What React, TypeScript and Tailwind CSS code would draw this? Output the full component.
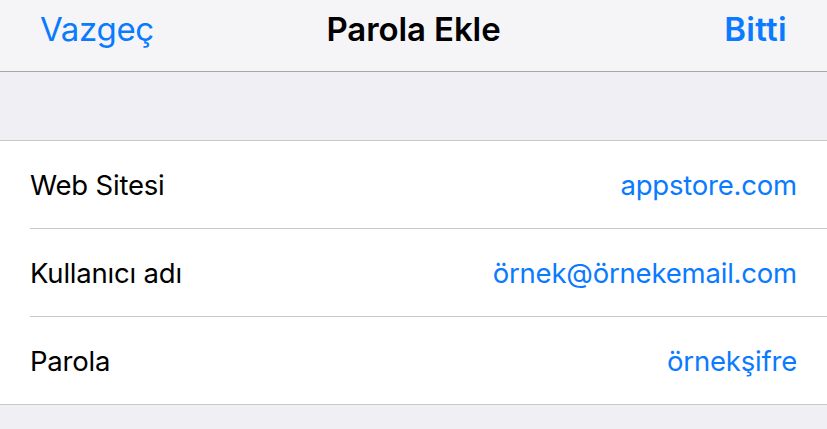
import React from 'react';

const rows = [
  { label: 'Web Sitesi', value: 'appstore.com' },
  { label: 'Kullanıcı adı', value: 'örnek@örnekemail.com' },
  { label: 'Parola', value: 'örnekşifre' },
];

export default function App() {
  return (
    <div className="h-[429px] w-[827px] overflow-hidden bg-[#efeff4] font-['Inter',sans-serif]">
      {/* Navigation bar */}
      <div className="grid h-[72px] grid-cols-[1fr_auto_1fr] items-center border-b border-[#a7a7aa] bg-[#f5f5f7] px-[40px] pb-[12px]">
        <span className="justify-self-start text-[33px] tracking-[-0.3px] text-[#0a7aff]">Vazgeç</span>
        <span className="text-[33px] font-semibold tracking-[-0.1px] text-black">Parola Ekle</span>
        <span className="justify-self-end text-[33px] font-semibold tracking-[0.3px] text-[#0a7aff]">Bitti</span>
      </div>

      <div className="h-[68px]" />

      {/* Form rows */}
      <div className="border-y border-[#c8c7cc] bg-white">
        {rows.map((row, i) => {
          const last = i === rows.length - 1;
          return (
            <div key={row.label} className="pl-[30px]">
              <div
                className={
                  'flex items-center justify-between pr-[30px] pt-[3px] ' +
                  (last ? 'h-[87px]' : 'h-[88px] border-b border-[#c8c7cc]')
                }
              >
                <span className="text-[27.5px] tracking-[-0.2px] text-black">{row.label}</span>
                <span className="text-[27.5px] tracking-[-0.2px] text-[#0a7aff]">{row.value}</span>
              </div>
            </div>
          );
        })}
      </div>
    </div>
  );
}
